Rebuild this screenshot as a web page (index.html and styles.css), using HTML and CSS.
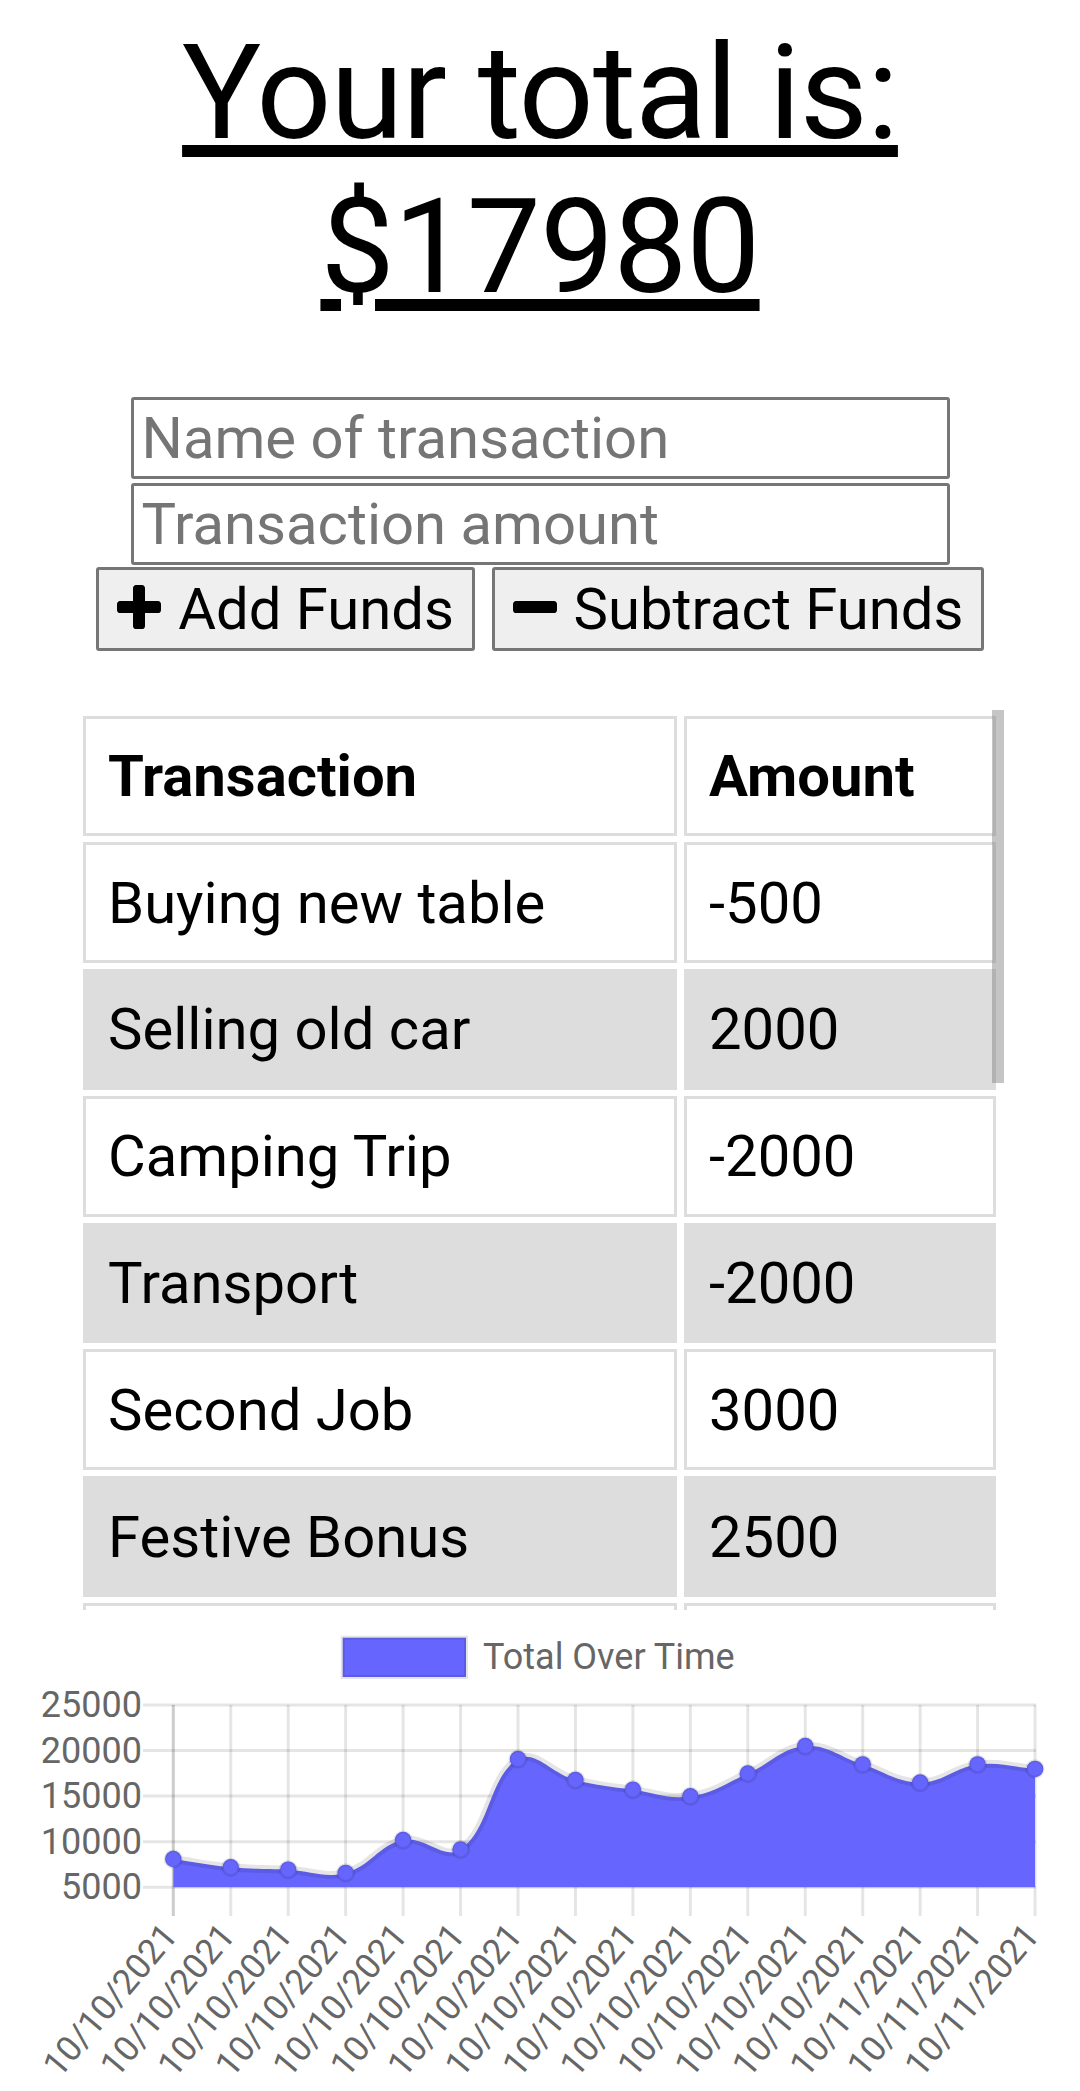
FILE: index.html
```html
<!DOCTYPE html>
<html lang="en">
<head>
<meta charset="utf-8">
<title>Budget Tracker</title>
<link rel="stylesheet" href="styles.css">
</head>
<body>
<h1 class="total">Your total is:<br>$17980</h1>

<div class="entry">
  <input class="field" type="text" placeholder="Name of transaction">
  <input class="field" type="text" placeholder="Transaction amount">
  <div class="actions">
    <button class="btn btn-add" type="button"><svg class="icon" viewBox="0 192 1408 1408"><path d="M1408 800v192q0 40-28 68t-68 28h-416v416q0 40-28 68t-68 28h-192q-40 0-68-28t-28-68v-416h-416q-40 0-68-28t-28-68v-192q0-40 28-68t68-28h416v-416q0-40 28-68t68-28h192q40 0 68 28t28 68v416h416q40 0 68 28t28 68z"/></svg>Add Funds</button>
    <button class="btn btn-sub" type="button"><svg class="icon" viewBox="0 192 1408 1408"><path d="M1408 800v192q0 40-28 68t-68 28h-1216q-40 0-68-28t-28-68v-192q0-40 28-68t68-28h1216q40 0 68 28t28 68z"/></svg>Subtract Funds</button>
  </div>
</div>

<div class="tx-scroll">
  <table class="tx">
    <thead>
      <tr><th class="col-name">Transaction</th><th>Amount</th></tr>
    </thead>
    <tbody>
      <tr><td>Buying new table</td><td>-500</td></tr>
      <tr><td>Selling old car</td><td>2000</td></tr>
      <tr><td>Camping Trip</td><td>-2000</td></tr>
      <tr><td>Transport</td><td>-2000</td></tr>
      <tr><td>Second Job</td><td>3000</td></tr>
      <tr><td>Festive Bonus</td><td>2500</td></tr>
      <tr><td>Dinner out</td><td>-720</td></tr>
    </tbody>
  </table>
  <div class="thumb"></div>
</div>

<svg class="chart" width="1080" height="480" viewBox="0 1611 1080 480">
  <g class="grid">
    <line x1="143" y1="1705.9" x2="1036" y2="1705.9"/>
    <line x1="143" y1="1751.5" x2="1036" y2="1751.5"/>
    <line x1="143" y1="1797.1" x2="1036" y2="1797.1"/>
    <line x1="143" y1="1842.7" x2="1036" y2="1842.7"/>
    <line x1="143" y1="1888.3" x2="1036" y2="1888.3"/>
    <line class="zero" x1="173.3" y1="1705.9" x2="173.3" y2="1917"/>
    <line x1="230.75" y1="1705.9" x2="230.75" y2="1917"/>
    <line x1="288.2" y1="1705.9" x2="288.2" y2="1917"/>
    <line x1="345.65" y1="1705.9" x2="345.65" y2="1917"/>
    <line x1="403.1" y1="1705.9" x2="403.1" y2="1917"/>
    <line x1="460.55" y1="1705.9" x2="460.55" y2="1917"/>
    <line x1="518" y1="1705.9" x2="518" y2="1917"/>
    <line x1="575.45" y1="1705.9" x2="575.45" y2="1917"/>
    <line x1="632.9" y1="1705.9" x2="632.9" y2="1917"/>
    <line x1="690.35" y1="1705.9" x2="690.35" y2="1917"/>
    <line x1="747.8" y1="1705.9" x2="747.8" y2="1917"/>
    <line x1="805.25" y1="1705.9" x2="805.25" y2="1917"/>
    <line x1="862.7" y1="1705.9" x2="862.7" y2="1917"/>
    <line x1="920.15" y1="1705.9" x2="920.15" y2="1917"/>
    <line x1="977.6" y1="1705.9" x2="977.6" y2="1917"/>
    <line x1="1035.05" y1="1705.9" x2="1035.05" y2="1917"/>
  </g>

  <g class="ylabels">
    <text x="142" y="1705.9">25000</text>
    <text x="142" y="1751.5">20000</text>
    <text x="142" y="1797.1">15000</text>
    <text x="142" y="1842.7">10000</text>
    <text x="142" y="1888.3">5000</text>
  </g>

  <g class="xlabels">
    <text transform="translate(170.3 1930) rotate(-50)">10/10/2021</text>
    <text transform="translate(227.75 1930) rotate(-50)">10/10/2021</text>
    <text transform="translate(285.2 1930) rotate(-50)">10/10/2021</text>
    <text transform="translate(342.65 1930) rotate(-50)">10/10/2021</text>
    <text transform="translate(400.1 1930) rotate(-50)">10/10/2021</text>
    <text transform="translate(457.55 1930) rotate(-50)">10/10/2021</text>
    <text transform="translate(515 1930) rotate(-50)">10/10/2021</text>
    <text transform="translate(572.45 1930) rotate(-50)">10/10/2021</text>
    <text transform="translate(629.9 1930) rotate(-50)">10/10/2021</text>
    <text transform="translate(687.35 1930) rotate(-50)">10/10/2021</text>
    <text transform="translate(744.8 1930) rotate(-50)">10/10/2021</text>
    <text transform="translate(802.25 1930) rotate(-50)">10/10/2021</text>
    <text transform="translate(859.7 1930) rotate(-50)">10/10/2021</text>
    <text transform="translate(917.15 1930) rotate(-50)">10/11/2021</text>
    <text transform="translate(974.6 1930) rotate(-50)">10/11/2021</text>
    <text transform="translate(1032.05 1930) rotate(-50)">10/11/2021</text>
  </g>

  <path class="area" d="M173.3 1860 C196.28 1863.32 207.66 1866.15 230.75 1868.3 C253.62 1870.43 265.23 1869.58 288.2 1870.7 C311.19 1871.82 324.27 1879.41 345.65 1873.9 C370.23 1867.57 378.65 1846.08 403.1 1841.1 C424.61 1836.72 444.37 1861.91 460.55 1850.5 C490.33 1829.51 488.74 1777.8 518 1760.1 C534.7 1750 551.92 1774.73 575.45 1781 C597.88 1786.97 609.83 1787.43 632.9 1790.7 C655.79 1793.95 668.14 1800.43 690.35 1797.3 C714.1 1793.95 725.16 1784.39 747.8 1774.5 C771.12 1764.31 781.65 1748.97 805.25 1747.1 C827.61 1745.33 839.72 1758.1 862.7 1765.4 C885.68 1772.7 897.17 1783.6 920.15 1783.6 C943.13 1783.6 954.11 1768.2 977.6 1765.4 C1000.07 1762.72 1012.07 1768.1 1035.05 1769.9 L1035.05 1888.3 L173.3 1888.3 Z"/>
  <path class="border" d="M173.3 1860 C196.28 1863.32 207.66 1866.15 230.75 1868.3 C253.62 1870.43 265.23 1869.58 288.2 1870.7 C311.19 1871.82 324.27 1879.41 345.65 1873.9 C370.23 1867.57 378.65 1846.08 403.1 1841.1 C424.61 1836.72 444.37 1861.91 460.55 1850.5 C490.33 1829.51 488.74 1777.8 518 1760.1 C534.7 1750 551.92 1774.73 575.45 1781 C597.88 1786.97 609.83 1787.43 632.9 1790.7 C655.79 1793.95 668.14 1800.43 690.35 1797.3 C714.1 1793.95 725.16 1784.39 747.8 1774.5 C771.12 1764.31 781.65 1748.97 805.25 1747.1 C827.61 1745.33 839.72 1758.1 862.7 1765.4 C885.68 1772.7 897.17 1783.6 920.15 1783.6 C943.13 1783.6 954.11 1768.2 977.6 1765.4 C1000.07 1762.72 1012.07 1768.1 1035.05 1769.9"/>

  <g class="points">
    <circle cx="173.3" cy="1860" r="8.25"/>
    <circle cx="230.75" cy="1868.3" r="8.25"/>
    <circle cx="288.2" cy="1870.7" r="8.25"/>
    <circle cx="345.65" cy="1873.9" r="8.25"/>
    <circle cx="403.1" cy="1841.1" r="8.25"/>
    <circle cx="460.55" cy="1850.5" r="8.25"/>
    <circle cx="518" cy="1760.1" r="8.25"/>
    <circle cx="575.45" cy="1781" r="8.25"/>
    <circle cx="632.9" cy="1790.7" r="8.25"/>
    <circle cx="690.35" cy="1797.3" r="8.25"/>
    <circle cx="747.8" cy="1774.5" r="8.25"/>
    <circle cx="805.25" cy="1747.1" r="8.25"/>
    <circle cx="862.7" cy="1765.4" r="8.25"/>
    <circle cx="920.15" cy="1783.6" r="8.25"/>
    <circle cx="977.6" cy="1765.4" r="8.25"/>
    <circle cx="1035.05" cy="1769.9" r="8.25"/>
  </g>

  <g class="legend">
    <rect class="legend-box" x="342.7" y="1638.7" width="123.3" height="39.3"/>
    <text class="legend-text" x="483" y="1658">Total Over Time</text>
  </g>
</svg>
</body>
</html>
```

FILE: styles.css
```css
* {
  box-sizing: border-box;
}

html,
body {
  margin: 0;
  padding: 0;
  background: #fff;
}

body {
  width: 1080px;
  font-family: Roboto, "Liberation Sans", Arial, sans-serif;
  color: #000;
}

/* ---------- total heading ---------- */
.total {
  margin: 15.5px 0 0;
  font-size: 132px;
  font-weight: 400;
  line-height: normal;
  letter-spacing: -1px;
  text-align: center;
  text-decoration: underline;
  text-decoration-thickness: 12px;
  text-underline-offset: 7px;
}

/* ---------- entry form ---------- */
.entry {
  margin-top: 73px;
  display: flex;
  flex-direction: column;
  align-items: center;
}

.field {
  display: block;
  width: 819px;
  height: 82px;
  margin: 0;
  padding: 0 8px;
  border: 3px solid #767676;
  border-radius: 3px;
  background: #fff;
  font-family: Roboto, "Liberation Sans", Arial, sans-serif;
  font-size: 58px;
  color: #000;
}

.field + .field {
  margin-top: 4px;
}

.field::placeholder {
  color: #757575;
}

.actions {
  margin-top: 2px;
  display: flex;
  justify-content: center;
  gap: 17px;
}

.btn {
  height: 84px;
  margin: 0;
  padding: 0;
  border: 3px solid #767676;
  border-radius: 3px;
  background: #efefef;
  font-family: Roboto, "Liberation Sans", Arial, sans-serif;
  font-size: 58px;
  color: #000;
  white-space: nowrap;
}

.btn-add {
  width: 379px;
}

.btn-sub {
  width: 492px;
}

.icon {
  width: 44px;
  height: 44px;
  margin-right: 17px;
  fill: currentColor;
  vertical-align: baseline;
}

/* ---------- transactions table ---------- */
.tx-scroll {
  position: relative;
  width: 928px;
  height: 900px;
  margin: 59px 0 0 76px;
  overflow: hidden;
}

.tx {
  width: 927px;
  border-collapse: separate;
  border-spacing: 7px 6px;
  table-layout: fixed;
  font-size: 58px;
}

.tx th,
.tx td {
  padding: 23.4px 22px;
  border: 3px solid #ddd;
  text-align: left;
  line-height: normal;
  white-space: nowrap;
}

.tx th {
  font-weight: 700;
}

.tx .col-name {
  width: 594px;
}

.tx tbody tr:nth-child(even) td {
  background: #ddd;
}

.thumb {
  position: absolute;
  top: 0;
  right: 0;
  width: 12px;
  height: 373px;
  background: rgba(128, 128, 128, 0.46);
}

/* ---------- chart ---------- */
.chart {
  display: block;
  font-family: Roboto, "Liberation Sans", Arial, sans-serif;
}

.grid line {
  stroke: rgba(0, 0, 0, 0.1);
  stroke-width: 3;
}

.grid line.zero {
  stroke: rgba(0, 0, 0, 0.2);
}

.ylabels text {
  font-size: 36px;
  fill: #666;
  text-anchor: end;
  dominant-baseline: central;
}

.xlabels text {
  font-size: 35px;
  fill: #666;
  text-anchor: end;
  dominant-baseline: central;
}

.area {
  fill: #6666ff;
}

.border {
  fill: none;
  stroke: rgba(0, 0, 0, 0.1);
  stroke-width: 8;
}

.points circle {
  fill: #6666ff;
  stroke: rgba(0, 0, 0, 0.1);
  stroke-width: 2.75;
}

.legend-box {
  fill: #6666ff;
  stroke: rgba(0, 0, 0, 0.1);
  stroke-width: 4;
}

.legend-text {
  font-size: 36px;
  fill: #666;
  dominant-baseline: central;
}
```
